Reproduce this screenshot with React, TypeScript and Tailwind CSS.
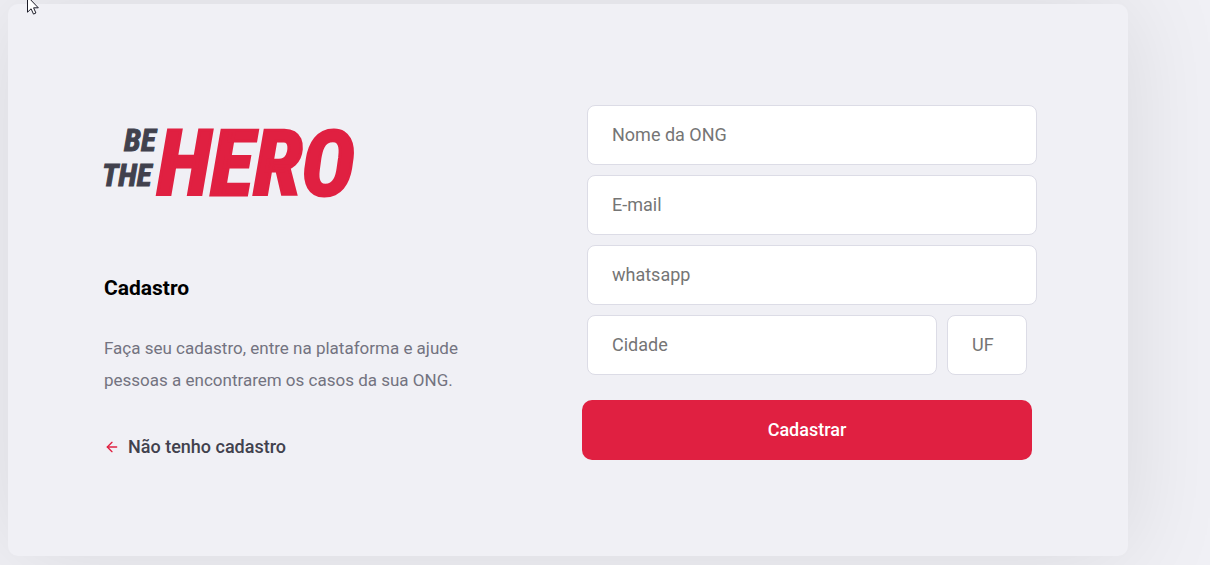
import { ArrowLeft } from 'lucide-react';

const fieldClass =
  'h-15 rounded-lg border border-[#dcdce6] bg-white px-6 pb-0.5 text-lg text-[#333333] placeholder:text-[#757575] outline-none focus:border-[#e02041]';

function Logo() {
  return (
    <svg
      role="img"
      aria-label="Be The Hero"
      viewBox="0 0 250 108"
      className="h-27 w-[250px] overflow-visible font-['Roboto_Condensed','Liberation_Sans_Narrow',sans-serif] font-bold italic"
    >
      <g fontSize="31" fill="#41414d" stroke="#41414d" strokeWidth="1">
        <text x="20" y="51">BE</text>
        <text x="-2" y="86">THE</text>
      </g>
      <text x="53" y="95" fontSize="90" fill="#e02041" stroke="#e02041" strokeWidth="3">HERO</text>
    </svg>
  );
}

function Pointer() {
  return (
    <svg
      aria-hidden="true"
      viewBox="0 0 12 19"
      className="pointer-events-none absolute -top-1 left-[27px] h-[19px] w-3"
    >
      <path
        d="M.5 .5V16.2L4.1 12.8L6.5 18.1L8.9 17L6.6 11.8H11.3Z"
        fill="#ffffff"
        stroke="#1c1c28"
      />
    </svg>
  );
}

export default function App() {
  return (
    <div className="relative min-h-screen overflow-hidden bg-[#f0f0f5] pt-1 pr-2 pb-2 pl-2 font-[Roboto,sans-serif] antialiased">
      <main className="flex w-full max-w-[1120px] items-start justify-between gap-8 rounded-[10px] bg-[#f0f0f5] p-24 shadow-[0_0_100px_rgba(0,0,0,0.1)]">
        <section className="flex w-full max-w-[380px] flex-col items-start">
          <Logo />
          <h1 className="mt-16 text-[21px] leading-8 font-bold text-black">Cadastro</h1>
          <p className="mt-7 text-[17px] leading-8 text-[#737380]">
            Faça seu cadastro, entre na plataforma e ajude pessoas a encontrarem os casos da sua ONG.
          </p>
          <a href="#" className="mt-[38px] flex items-center gap-2 text-lg leading-[26px] font-medium text-[#41414d]">
            <ArrowLeft size={16} color="#e02041" />
            Não tenho cadastro
          </a>
        </section>

        <form className="flex w-full max-w-[450px] flex-col" onSubmit={(e) => e.preventDefault()}>
          <div className="-mr-[5px] flex flex-col gap-2.5 py-[5px] pl-[5px]">
            <input aria-label="Nome da ONG" placeholder="Nome da ONG" className={fieldClass} />
            <input aria-label="E-mail" type="email" placeholder="E-mail" className={fieldClass} />
            <input aria-label="whatsapp" placeholder="whatsapp" className={fieldClass} />
            <div className="flex gap-2.5 pr-2.5">
              <input aria-label="Cidade" placeholder="Cidade" className={`${fieldClass} min-w-0 flex-1`} />
              <input aria-label="UF" placeholder="UF" className={`${fieldClass} w-20`} />
            </div>
          </div>
          <button
            type="submit"
            className="mt-5 h-15 rounded-[10px] bg-[#e02041] text-lg font-medium text-white"
          >
            Cadastrar
          </button>
        </form>
      </main>
      <Pointer />
    </div>
  );
}
